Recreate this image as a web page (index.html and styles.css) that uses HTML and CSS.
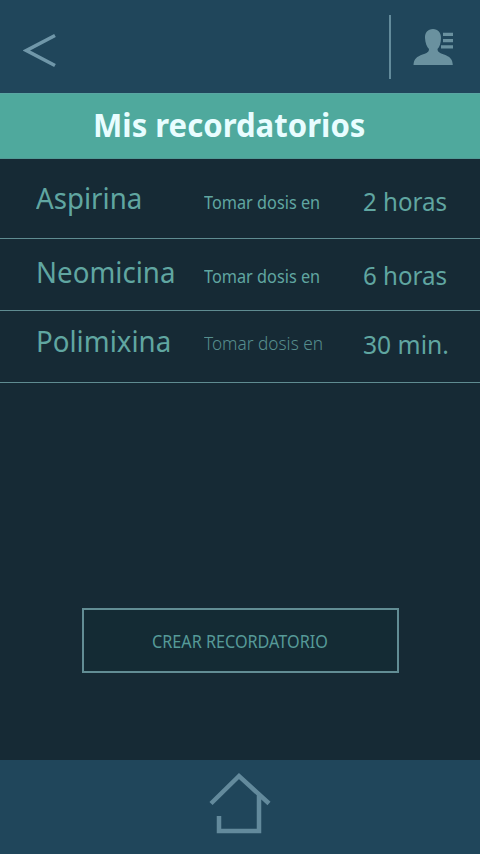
FILE: index.html
```
<!DOCTYPE html>
<html lang="es">
<head>
<meta charset="utf-8">
<title>Mis recordatorios</title>
<link rel="stylesheet" href="styles.css">
</head>
<body>
<header class="topbar">
  <svg class="back" viewBox="0 0 34 36" aria-label="Volver"><path d="M32 2.500 3.500 17.500 32 32.500"/></svg>
  <div class="divider"></div>
  <svg class="profile" viewBox="0 0 42 40" aria-label="Perfil">
    <path d="M20 1C14.800 1 11.800 4.500 12 10C12.200 15 14 19 16 21C16 24 14 25 9.500 26.500C4 28.500 .8 31 .5 37H39.800C39.600 31 36.500 28.500 31 26.500C27 25 24.500 24 24.500 21C26.500 19 28 15 28 10C28 4.500 25 1 20 1Z"/>
    <path d="M30 4.800H40V8H30ZM30 11H40V14.200H30ZM28 17.300H40V20.500H28Z"/>
  </svg>
</header>
<h1 class="title"><span>Mis recordatorios</span></h1>
<main class="content">
  <ul class="list">
    <li class="row first"><span class="name">Aspirina</span><span class="label">Tomar dosis en</span><span class="time">2 horas</span></li>
    <li class="row second"><span class="name">Neomicina</span><span class="label">Tomar dosis en</span><span class="time">6 horas</span></li>
    <li class="row third"><span class="name">Polimixina</span><span class="label thin">Tomar dosis en</span><span class="time minutes">30 min.</span></li>
  </ul>
  <button class="create"><span>CREAR RECORDATORIO</span></button>
</main>
<footer class="bottombar">
  <svg class="home" viewBox="0 0 62 64" aria-label="Inicio"><path d="M2 31.500 30 4 60 31.500M50 22.500V59H10V44"/></svg>
</footer>
</body>
</html>
```
FILE: styles.css
```
* { box-sizing: border-box; }
body {
  margin: 0;
  width: 480px;
  height: 854px;
  overflow: hidden;
  display: flex;
  flex-direction: column;
  background: #162a35;
  color: #60a6a1;
  font-family: "Noto Sans", sans-serif;
}
.topbar {
  height: 93px;
  flex: none;
  display: flex;
  align-items: flex-start;
  background: #20465b;
}
.back {
  width: 34px;
  height: 36px;
  margin: 33px 0 0 23px;
  fill: none;
  stroke: #7097a9;
  stroke-width: 3.6;
}
.divider {
  width: 2px;
  height: 64px;
  margin: 15px 0 0 332px;
  background: #638b9b;
}
.profile {
  width: 42px;
  height: 40px;
  margin: 28px 0 0 22px;
  fill: #6a919f;
}
.title {
  height: 66px;
  flex: none;
  margin: 0;
  padding-left: 93px;
  background: #4fa99d;
  border-top: 1px solid #5aa6a3;
  border-bottom: 1px solid #529b96;
  color: #e8fdff;
  font-size: 32px;
  font-weight: 700;
  line-height: 62px;
  white-space: nowrap;
}
.title span, .row span, .create span {
  display: inline-block;
  justify-self: start;
  transform-origin: left center;
  white-space: nowrap;
}
.title span { transform: scaleX(.972); }
.content { flex: 1; }
.list { list-style: none; margin: 0; padding: 0; }
.row {
  height: 72px;
  display: grid;
  grid-template-columns: 168px 159px 1fr;
  padding-left: 36px;
  border-bottom: 1px solid #5f8c91;
  line-height: 40px;
}
.first { height: 80px; padding-top: 19px; }
.second { padding-top: 13px; }
.third { padding-top: 10px; }
.name { font-size: 28.500px; transform: scaleX(.971); }
.label { font-size: 17.500px; padding-top: 4px; transform: scaleX(.93); }
.time { font-size: 25.500px; padding-top: 3px; transform: scaleX(.945); }
.minutes { transform: scaleX(.967); }
.row .thin { font-weight: 300; color: #568e8e; padding-top: 2px; transform: scaleX(.985); }
.create {
  display: block;
  width: 317px;
  height: 65px;
  margin: 225px 0 0 82px;
  padding: 0 0 0 68px;
  border: 2px solid #628d94;
  background: #142b34;
  color: #569a98;
  font: 17.500px/63px "Noto Sans", sans-serif;
  text-align: left;
}
.create span { transform: scaleX(.925); }
.bottombar {
  height: 94px;
  flex: none;
  display: flex;
  background: #20465b;
}
.home {
  width: 62px;
  height: 64px;
  margin: 12px 0 0 209px;
  fill: none;
  stroke: #638a9c;
  stroke-width: 4.500;
}
```
